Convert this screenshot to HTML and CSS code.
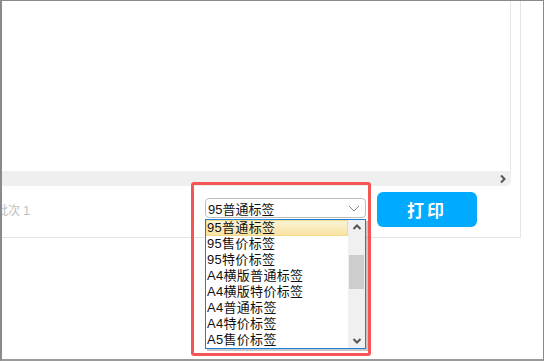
FILE: index.html
```html
<!DOCTYPE html>
<html lang="zh-CN">
<head>
    <meta charset="UTF-8">
    <meta name="viewport" content="width=device-width, initial-scale=1.0">
    <title>打印标签</title>
    <link rel="stylesheet" href="styles.css">
</head>
<body>
    <div class="frame">
        <div class="panel">
            <!-- 表格区域 -->
            <div class="grid">
                <div class="grid-body"></div>
                <div class="hscroll">
                    <svg class="hscroll-arrow" width="8" height="10" viewBox="0 0 8 10"><path d="M2 1.5 L5.5 5 L2 8.5" fill="none" stroke="#555" stroke-width="2"/></svg>
                </div>
            </div>

            <!-- 底部工具栏 -->
            <div class="footer">
                <span class="batch">批次 1</span>
                <div class="select-wrap">
                    <div class="select">
                        <span>95普通标签</span>
                        <svg class="select-arrow" width="12" height="7" viewBox="0 0 12 7"><path d="M1 1 L6 6 L11 1" fill="none" stroke="#888" stroke-width="1"/></svg>
                    </div>
                    <div class="dropdown">
                        <ul class="options">
                            <li class="active">95普通标签</li>
                            <li>95售价标签</li>
                            <li>95特价标签</li>
                            <li>A4横版普通标签</li>
                            <li>A4横版特价标签</li>
                            <li>A4普通标签</li>
                            <li>A4特价标签</li>
                            <li>A5售价标签</li>
                        </ul>
                        <div class="vscroll">
                            <svg class="vscroll-btn" width="16" height="14" viewBox="0 0 16 14"><path d="M4.5 9 L8 5.5 L11.5 9" fill="none" stroke="#555" stroke-width="2"/></svg>
                            <div class="vscroll-track"><div class="vscroll-thumb"></div></div>
                            <svg class="vscroll-btn" width="16" height="14" viewBox="0 0 16 14"><path d="M4.5 5 L8 8.5 L11.5 5" fill="none" stroke="#555" stroke-width="2"/></svg>
                        </div>
                    </div>
                </div>
                <button class="print-btn">打印</button>
            </div>
        </div>

        <!-- 标注框 -->
        <div class="mark"></div>
    </div>
</body>
</html>
```

FILE: styles.css
```css
* {
    box-sizing: border-box;
}

body {
    margin: 0;
    padding: 0;
    background-color: #fff;
    font-family: 'Liberation Sans', 'Noto Sans CJK SC', sans-serif;
}

.frame {
    position: relative;
    width: 544px;
    height: 361px;
    border-top: 1px solid #8a8a8a;
    border-left: 2px solid #8a8a8a;
    border-right: 1px solid #8a8a8a;
    border-bottom: 2px solid #9a9a9a;
    overflow: hidden;
    background: #fff;
}

.panel {
    width: 519px;
    height: 237px;
    border-right: 1px solid #e4e4ec;
    border-bottom: 1px solid #e4e4e4;
    display: flex;
    flex-direction: column;
}

.grid {
    width: 509px;
    height: 185px;
    display: flex;
    flex-direction: column;
}

.grid-body {
    flex: 1;
    border-right: 1px solid #e6e6e6;
}

.hscroll {
    height: 15px;
    background: #efefef;
    border-bottom-right-radius: 5px;
    display: flex;
    align-items: center;
    justify-content: flex-end;
    padding-right: 4px;
}

.footer {
    flex: 1;
    display: flex;
    align-items: flex-start;
    padding-top: 6px;
}

.batch {
    flex: none;
    width: 209px;
    margin-left: -6px;
    margin-top: 9px;
    font-size: 12px;
    color: #bdbdbd;
}

.select-wrap {
    position: relative;
    width: 161px;
    margin-top: 6px;
}

.select {
    height: 20px;
    border: 1px solid #bdbdbd;
    border-radius: 4px;
    display: flex;
    align-items: center;
    justify-content: space-between;
    padding: 0 4px 0 2px;
    font-size: 13px;
    color: #111;
    background: #fff;
}

.select-arrow {
    margin-right: 1px;
}

.dropdown {
    position: absolute;
    top: 21px;
    left: 0;
    width: 161px;
    height: 130px;
    border: 1px solid #1a7fd8;
    background: #fff;
    box-shadow: 2px 2px 0 rgba(0, 0, 0, 0.22);
    display: flex;
    z-index: 2;
}

.options {
    list-style: none;
    margin: 0;
    padding: 0;
    flex: 1;
}

.options li {
    height: 16px;
    line-height: 16px;
    font-size: 13px;
    color: #111;
    padding-left: 1px;
    letter-spacing: 0.3px;
    white-space: nowrap;
}

.options li.active {
    background: linear-gradient(#fdf4d6, #f9e3a3);
    border: 1px solid #f1d98e;
    line-height: 14px;
    padding-left: 0;
}

.vscroll {
    width: 17px;
    background: #f0f0f0;
    display: flex;
    flex-direction: column;
    align-items: center;
}

.vscroll-btn {
    flex: none;
}

.vscroll-track {
    flex: 1;
    width: 100%;
    padding: 21px 1px 0;
}

.vscroll-thumb {
    height: 34px;
    background: #cdcdcd;
}

.print-btn {
    width: 100px;
    height: 35px;
    margin-left: 11px;
    border: none;
    border-radius: 6px;
    background: #00aaff;
    color: #fff;
    font-size: 17px;
    font-weight: bold;
    font-family: 'Noto Sans CJK SC', sans-serif;
    letter-spacing: 3px;
    cursor: pointer;
}

.mark {
    position: absolute;
    left: 189px;
    top: 181px;
    width: 180px;
    height: 174px;
    border: 3px solid #f55555;
    border-radius: 3px;
    pointer-events: none;
}
```
